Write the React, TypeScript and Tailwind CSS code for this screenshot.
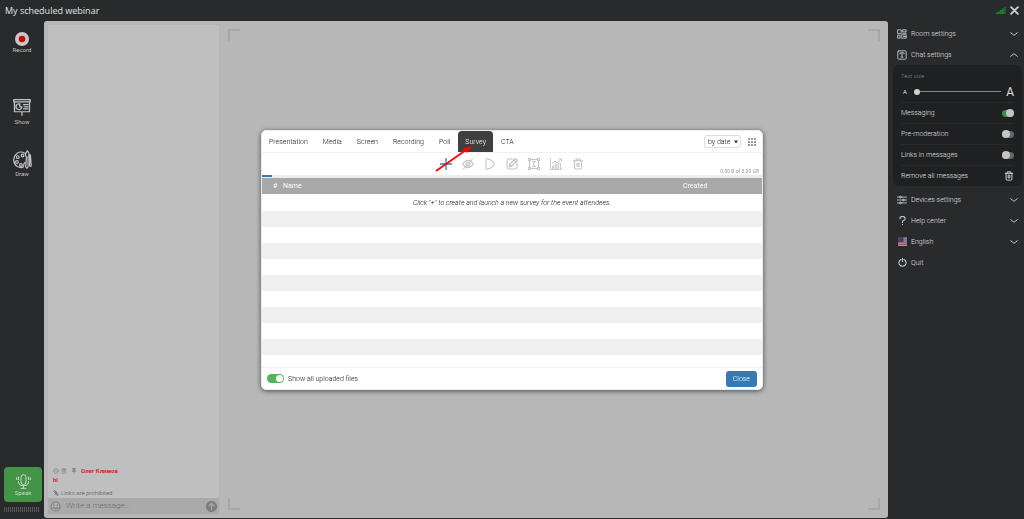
import type { ReactNode, SVGProps } from 'react';

type IconProps = SVGProps<SVGSVGElement> & { children?: ReactNode };

function Icon({ children, ...props }: IconProps) {
  return (
    <svg viewBox="0 0 24 24" fill="none" stroke="currentColor" strokeWidth="2.2" strokeLinecap="round" strokeLinejoin="round" aria-hidden="true" {...props}>
      {children}
    </svg>
  );
}

const trash = (
  <>
    <path d="M3 5.500h18M8 5.500V2h8v3.500M5 6v13a3 3 0 0 0 3 3h8a3 3 0 0 0 3-3V6" />
    <path d="M10 11v5.500h4V11z" />
  </>
);

const face = <><circle cx="12" cy="12" r="10" /><path d="M7 14q5 6 10 0M8 8v2M16 8v2" /></>;

const tools: { label: string; icon: ReactNode }[] = [
  { label: 'Add', icon: <path stroke="#337ab7" strokeWidth="2.600" d="M12 1v22M1 12h22" /> },
  { label: 'Hide', icon: <><path d="M1 12q11-15 22 0q-11 15-22 0zM3 22 21 2" /><circle cx="12" cy="12" r="4" /></> },
  { label: 'Launch', icon: <path d="M4 4q0-3 3-2.500q9 2 13 8.500q1 2 0 4q-4 6.500-13 8.500q-3 .500-3-2.500z" /> },
  { label: 'Edit', icon: <path d="M14 2H5Q2 2 2 5v14q0 3 3 3h14q3 0 3-3v-9M6 18l1-5L19 1l4 4L11 17zM16 4l4 4M8 14l2 2" /> },
  { label: 'Rename', icon: <path d="M1 1h4v4H1zM19 1h4v4h-4zM1 19h4v4H1zM19 19h4v4h-4zM5 3h14M5 21h14M3 5v14M21 5v14M9 7h6M12 7v10M9 17h6" /> },
  { label: 'Statistics', icon: <path strokeWidth="1.800" d="M1 1v22h22M5 22v-6h3v6M11 22v-9h3v9M17 22V10h4v12M4 11l6-5 4 4 9-8M18 2h5v4" /> },
  { label: 'Delete', icon: trash },
];

const roomIcon = <path d="M2 2h8v9H2zM14 2h8v5h-8zM2 15h5v7H2zM11 14h11v8H11zM14 10.500h8M15 18h7" />;
const chatIcon = <><rect x="2" y="2" width="20" height="20" rx="2" /><path d="M7 9V7h10v2M12 7v10M10 17h4" /></>;
const devicesIcon = <><path d="M1 5h5M10 5h13M1 12h12M17 12h6M1 19h5M10 19h13" /><circle cx="8" cy="5" r="2" /><circle cx="15" cy="12" r="2" /><circle cx="8" cy="19" r="2" /></>;
const helpIcon = <path strokeWidth="3" d="M5 7q0-6 7-6t7 6q0 3-4 5t-3 5M12 22v.5" />;
const quitIcon = <path strokeWidth="3" d="M12 1v8M8 4a9.500 9.500 0 1 0 8 0" />;
const flag = (
  <svg viewBox="0 0 18 16" className="size-[9px]" preserveAspectRatio="none" aria-hidden="true">
    <path fill="#a99399" d="M0 0h18v16H0z" />
    <path stroke="#975760" strokeWidth="2" d="M0 1h18M0 5h18M0 9h18M0 13h18" />
    <path fill="#35456f" d="M0 0h11v9H0z" />
  </svg>
);

function SideButton({ label, children }: { label: string; children: ReactNode }) {
  return (
    <button className="flex w-full flex-col items-center text-[6px] leading-[8px] text-[#c4c4c4]">
      {children}
      <span>{label}</span>
    </button>
  );
}

function MenuRow({ label, icon, chevron }: { label: string; icon: ReactNode; chevron?: 'up' | 'down' }) {
  return (
    <button className="flex h-[21px] w-full shrink-0 items-center gap-[3px] pr-1 pl-[7px] text-[#e0e0e0]">
      <span className="flex w-3 justify-center text-[#c4c4c4]">{icon}</span>
      <span>{label}</span>
      {chevron && (
        <Icon className="ml-auto size-[8px]">
          <path strokeWidth="2.500" d={chevron === 'down' ? 'M2 8l10 8 10-8' : 'M2 16l10-8 10 8'} />
        </Icon>
      )}
    </button>
  );
}

function Toggle({ label, on }: { label: string; on?: boolean }) {
  return (
    <label className="flex h-[21px] items-center justify-between border-t border-[#27292b]">
      <span>{label}</span>
      <input type="checkbox" defaultChecked={on} className="peer sr-only" />
      <span className="flex h-[7px] w-3 items-center rounded-full bg-[#666] peer-checked:justify-end peer-checked:bg-[#3d8b40]">
        <span className="size-2 rounded-full bg-[#c4c4c4]" />
      </span>
    </label>
  );
}

function Corner({ className }: { className: string }) {
  return <span className={`size-3 border-[#a8a8a8] ${className}`} />;
}

function Header() {
  return (
    <header className="flex h-[21px] shrink-0 items-center justify-between px-[5px]">
      <h1 className="font-['Open_Sans',sans-serif] text-[9px] leading-[12px] font-normal text-[#e2e2e2]">My scheduled webinar</h1>
      <div className="flex items-center gap-1">
        <svg viewBox="0 0 20 14" className="h-[7px] w-[10px]" aria-hidden="true">
          <path stroke="#0c9427" strokeWidth="3.400" d="M2 14v-3M6 14V9M10 14V6M14 14V3" />
          <path stroke="#42614a" strokeWidth="2.500" d="M18 14V0" />
        </svg>
        <button aria-label="Close webinar" className="text-[#d0d0d0]">
          <Icon className="size-[9px]"><path strokeWidth="5" d="M3 3l18 18M21 3 3 21" /></Icon>
        </button>
      </div>
    </header>
  );
}

function LeftRail() {
  return (
    <nav className="flex w-11 shrink-0 flex-col pt-[11px] pb-[7px] font-normal">
      <SideButton label="Record">
        <svg viewBox="0 0 14 14" className="size-[14px]" aria-hidden="true"><circle cx="7" cy="7" r="7" fill="#c8c8c8" /><circle cx="7" cy="7" r="3.300" fill="#c30b0b" /></svg>
      </SideButton>
      <div className="mt-[45px]">
        <SideButton label="Show">
          <Icon className="mb-[2px] h-[17px] w-[18px]" preserveAspectRatio="none"><path strokeWidth="1.700" d="M1 1h22v3H1zM2 4v14h20V4M12 18v5M9 7a4 4 0 1 0 3 4H9V7M14 8h6M15 11h5M14 14h6" /></Icon>
        </SideButton>
      </div>
      <div className="mt-6">
        <SideButton label="Draw">
          <Icon className="mb-[1px] size-[19px]">
            <path strokeWidth="1.500" d="M15 4C8 0 1 5 1 13c0 7 7 10 11 9 3-1 0-4 3-6M18 1q-4 5-1 8l-1 12q2 4 3 0V9q3-4-1-8M21 6v14q2 2 2-1l-1-13" />
            <g strokeWidth="1.500"><circle cx="6" cy="9" r="1.700" /><circle cx="12" cy="7" r="1.700" /><circle cx="5" cy="15" r="1.700" /><circle cx="10" cy="19" r="1.700" /></g>
          </Icon>
        </SideButton>
      </div>
      <button className="mt-auto mr-[2px] ml-1 flex h-[35px] flex-col items-center rounded-[4px] bg-[#439447] pt-[7px] text-[6px] leading-[8px] text-[#c6dcc6]">
        <Icon className="size-[15px]"><path strokeWidth="1.600" d="M8 5a4 4 0 0 1 8 0v8a4 4 0 0 1-8 0zM4 12v2q1 5 8 5t8-5v-2M12 19v4M8 23h8M4 5v4M1 6v3M20 5v4M23 6v3" /></Icon>
        <span>Speak</span>
      </button>
      <div className="mx-auto mt-[5px] h-[5px] w-9 bg-[repeating-linear-gradient(90deg,#55585a_0px,#55585a_1px,transparent_1px,transparent_2px)]" />
    </nav>
  );
}

function Chat() {
  return (
    <section className="flex w-[173px] shrink-0 flex-col justify-end border border-[#b5b5b5] bg-[#bfbfbf]">
      <div className="flex items-center gap-[2px] pl-[5px] text-[#808080]">
        <Icon className="size-[6px]">{face}</Icon>
        <Icon className="size-[6px]">{trash}</Icon>
        <Icon className="ml-[2px] size-[6px]"><path fill="currentColor" d="M7 1h10l-2 8 4 5H5l4-5zM12 14v9" /></Icon>
        <span className="ml-[2px] text-[6px] leading-[9px] font-bold text-[#cd2828]">Олег Климов</span>
      </div>
      <p className="pl-[5px] text-[6px] leading-[9px] font-bold text-[#cd2828]">hi</p>
      <p className="flex items-center gap-[2px] pt-1 pb-[1px] pl-[5px] text-[6px] leading-[9px] text-[#505050]">
        <Icon className="size-[6px]"><path strokeWidth="3" d="M10 13 3 6l3-4 8 7-4 4M13 11l8 7-4 4-7-7 3-4" /></Icon>
        Links are prohibited
      </p>
      <div className="flex h-4 items-center gap-[5px] bg-[#aaa] px-[2px] text-[#7d7d7d]">
        <button aria-label="Emoji"><Icon className="size-[11px]">{face}</Icon></button>
        <input aria-label="Message" placeholder="Write a message..." className="min-w-0 flex-1 bg-transparent text-[8px] leading-[12px] outline-none placeholder:text-[#6d6d6d]" />
        <button aria-label="Send"><Icon className="size-[11px]"><circle cx="12" cy="12" r="11" fill="currentColor" /><path stroke="#aaa" strokeWidth="2.500" d="M12 19V5M6 11l6-6 6 6" /></Icon></button>
      </div>
    </section>
  );
}

function Sidebar() {
  return (
    <aside className="flex w-[136px] shrink-0 flex-col pt-[2px] pr-[2px] pl-[1px] text-[7px] leading-[10px]">
      <MenuRow label="Room settings" icon={<Icon className="size-[10px]">{roomIcon}</Icon>} chevron="down" />
      <MenuRow label="Chat settings" icon={<Icon className="size-[10px]">{chatIcon}</Icon>} chevron="up" />
      <div className="ml-1 rounded-md bg-[#1e2021] px-2 text-[#e0e0e0]">
        <label className="block pt-[6px] pb-[4px] text-[6px] text-[#8c8c8c]" htmlFor="text-size">Text size</label>
        <div className="flex h-[17px] items-center pb-[4px]">
          <span className="w-[13px] pl-[2px] text-[6px] font-normal">A</span>
          <input id="text-size" type="range" defaultValue={0} className="h-[7px] min-w-0 flex-1 appearance-none bg-[linear-gradient(#888,#888)] bg-[length:100%_1px] bg-center bg-no-repeat [&::-webkit-slider-thumb]:size-[6px] [&::-webkit-slider-thumb]:appearance-none [&::-webkit-slider-thumb]:rounded-full [&::-webkit-slider-thumb]:bg-[#d0d0d0]" />
          <span className="pl-[5px] text-[12px] font-normal">A</span>
        </div>
        <Toggle label="Messaging" on />
        <Toggle label="Pre-moderation" />
        <Toggle label="Links in messages" />
        <button className="flex h-[21px] w-full items-center justify-between border-t border-[#27292b]">
          <span>Remove all messages</span>
          <Icon className="size-[10px]">{trash}</Icon>
        </button>
      </div>
      <div className="flex flex-col pt-[3px]">
        <MenuRow label="Devices settings" icon={<Icon className="size-[10px]">{devicesIcon}</Icon>} chevron="down" />
        <MenuRow label="Help center" icon={<Icon className="size-[9px]">{helpIcon}</Icon>} chevron="down" />
        <MenuRow label="English" icon={flag} chevron="down" />
        <MenuRow label="Quit" icon={<Icon className="size-[9px]">{quitIcon}</Icon>} />
      </div>
    </aside>
  );
}

function SurveyDialog() {
  const tabs = ['Presentation', 'Media', 'Screen', 'Recording', 'Poll', 'Survey', 'CTA'];
  return (
    <div role="dialog" aria-label="Survey" className="relative w-[502px] overflow-hidden rounded-[5px] border border-[#ededed] bg-white text-[7px] leading-[10px] text-[#111] shadow-[0_1px_5px_#0009]">
      <div className="flex h-[22px] items-stretch border-b border-[#f1f1f1] pr-[6px]">
        <div role="tablist" className="flex gap-px">
          {tabs.map((tab) => (
            <button key={tab} role="tab" aria-selected={tab === 'Survey'} className="px-[7px] aria-selected:rounded-t-[4px] aria-selected:bg-[#3f3f3f] aria-selected:text-white">{tab}</button>
          ))}
        </div>
        <div className="ml-auto flex items-center gap-[7px]">
          <div className="relative flex items-center">
            <select aria-label="Sort" className="h-[13px] w-[37px] appearance-none rounded-[3px] border border-[#ddd] bg-white pl-[3px] text-[7px] leading-[10px]"><option>by date</option></select>
            <svg viewBox="0 0 8 8" className="pointer-events-none absolute right-[3px] size-[4px]" aria-hidden="true"><path fill="#333" d="M0 1h8L4 7z" /></svg>
          </div>
          <button aria-label="Grid view">
            <svg viewBox="0 0 8 8" className="size-2" fill="#999" aria-hidden="true"><path d="M0 0h2v2H0zM3 0h2v2H3zM6 0h2v2H6zM0 3h2v2H0zM3 3h2v2H3zM6 3h2v2H6zM0 6h2v2H0zM3 6h2v2H3zM6 6h2v2H6z" /></svg>
          </button>
        </div>
      </div>
      <div className="relative flex h-[22px] items-center justify-center gap-[10px] text-[#c4c4c4]">
        {tools.map((tool) => (
          <button key={tool.label} aria-label={tool.label}><Icon className="size-3">{tool.icon}</Icon></button>
        ))}
        <span className="absolute right-[3px] bottom-0 text-[5px] leading-[7px] font-normal text-[#999]">0.00 B of 5.00 GB</span>
      </div>
      <div className="h-[3px] bg-[#ededed]"><div className="h-[2px] w-[10px] bg-[#337ab7]" /></div>
      <table className="w-full table-fixed border-collapse">
        <thead className="bg-[#a8a8a8] text-left text-white">
          <tr className="h-4"><th className="w-[21px] pl-[11px] font-normal">#</th><th className="font-normal">Name</th><th className="w-[79px] font-normal">Created</th></tr>
        </thead>
        <tbody>
          <tr className="h-[17px]"><td colSpan={3} className="text-center italic">Click "+" to create and launch a new survey for the event attendees.</td></tr>
          {Array.from({ length: 9 }, (_, i) => (
            <tr key={i} className="h-4 odd:bg-white even:bg-[#f0f0f0]"><td colSpan={3} /></tr>
          ))}
        </tbody>
      </table>
      <div className="h-3" />
      <div className="flex h-[22px] items-center justify-between border-t border-[#f3f3f3] px-[5px]">
        <label className="flex items-center gap-1">
          <input type="checkbox" defaultChecked className="peer sr-only" />
          <span className="flex h-[9px] w-[17px] items-center rounded-full bg-[#a9d9ab] p-[1px] peer-checked:justify-end peer-checked:bg-[#55b45a]"><span className="size-[7px] rounded-full bg-white" /></span>
          Show all uploaded files
        </label>
        <button className="h-4 rounded-[3px] bg-[#337ab7] px-[7px] text-white">Close</button>
      </div>
      <svg viewBox="0 0 38 28" className="pointer-events-none absolute top-[14px] left-[173px] h-7 w-[38px]" aria-hidden="true">
        <path stroke="red" strokeWidth="1.800" d="M1 26 31 5" /><path fill="red" d="M37 1 32 8l-4-5z" />
      </svg>
    </div>
  );
}

export default function App() {
  return (
    <div className="flex min-h-screen flex-col bg-[#282a2c] font-[Roboto,'Noto_Sans',sans-serif] font-light">
      <Header />
      <div className="flex flex-1">
        <LeftRail />
        <main className="mb-[1px] flex min-w-0 flex-1 rounded-[3px] bg-[#b7b7b7] py-[3px] pr-2 pl-[3px]">
          <Chat />
          <div className="flex flex-1 flex-col justify-between py-[5px] pl-2">
            <div className="flex justify-between"><Corner className="border-t-2 border-l-2" /><Corner className="border-t-2 border-r-2" /></div>
            <div className="flex justify-between"><Corner className="border-b-2 border-l-2" /><Corner className="border-r-2 border-b-2" /></div>
          </div>
        </main>
        <Sidebar />
      </div>
      <div className="fixed inset-0 flex items-center justify-center pt-[1px]"><SurveyDialog /></div>
    </div>
  );
}
